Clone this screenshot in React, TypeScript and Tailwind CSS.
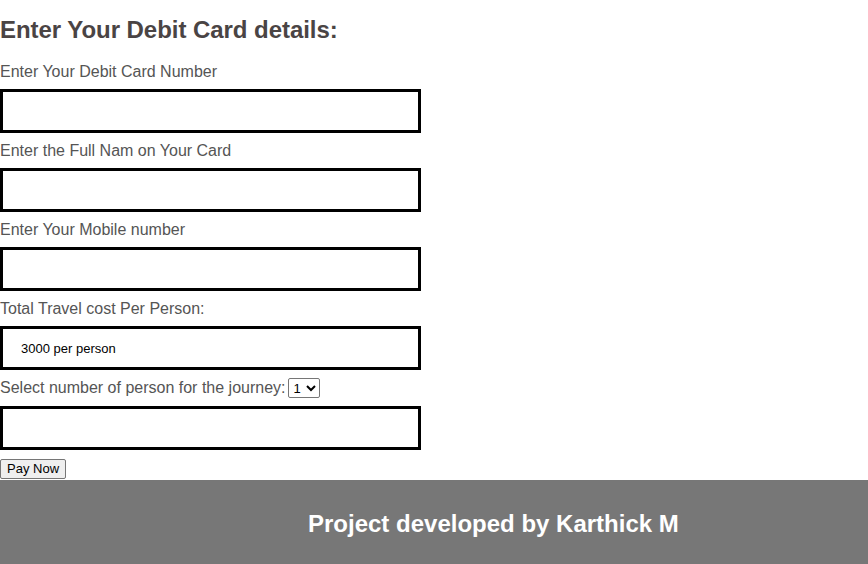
export default function App() {
  const font = { fontFamily: '"Liberation Sans", Arial, sans-serif' };
  const inputCls = "block w-[421px] h-[44px] border-[3px] border-black bg-white outline-none";
  return (
    <div className="w-[868px] h-[564px] bg-white flex flex-col" style={font}>
      <div className="flex-1 font-['Liberation_Sans',Arial,sans-serif]">
        <h2 className="text-[24px] leading-[28px] font-bold text-[#4a4444] mt-[16px] mb-0 tracking-[-0.05px]">Enter Your Debit Card details:</h2>
        <div className="mt-[19px]">
          <label className="block text-[16px] leading-[18px] text-[#555]">Enter Your Debit Card Number</label>
          <input className={inputCls + " mt-[8px]"} />
        </div>
        <div className="mt-[9px]">
          <label className="block text-[16px] leading-[18px] text-[#555]">Enter the Full Nam on Your Card</label>
          <input className={inputCls + " mt-[8px]"} />
        </div>
        <div className="mt-[9px]">
          <label className="block text-[16px] leading-[18px] text-[#555]">Enter Your Mobile number</label>
          <input className={inputCls + " mt-[8px]"} />
        </div>
        <div className="mt-[9px]">
          <label className="block text-[16px] leading-[18px] text-[#555]">Total Travel cost Per Person:</label>
          <input className={inputCls + " mt-[8px] pl-[18px] text-[13px] text-black"} defaultValue="3000 per person" readOnly />
        </div>
        <div className="mt-[9px] flex items-center h-[18px]">
          <span className="text-[16px] leading-[18px] text-[#555]">Select number of person for the journey:</span>
          <select className="ml-[2px] h-[20px] text-[13px] text-black border border-[#767676] rounded-[2px] bg-white px-[1px]">
            <option>1</option>
            <option>2</option>
            <option>3</option>
          </select>
        </div>
        <input className={inputCls + " mt-[9px]"} />
        <button className="mt-[9px] block h-[20px] px-[6px] text-[13px] leading-[16px] text-black bg-[#efefef] border border-[#767676] rounded-[2px]">Pay Now</button>
      </div>
      <footer className="h-[84px] bg-[#777777] flex items-center pl-[308px] pt-[4px]">
        <span className="text-white font-bold text-[24px] leading-[28px]">Project developed by Karthick M</span>
      </footer>
    </div>
  );
}
